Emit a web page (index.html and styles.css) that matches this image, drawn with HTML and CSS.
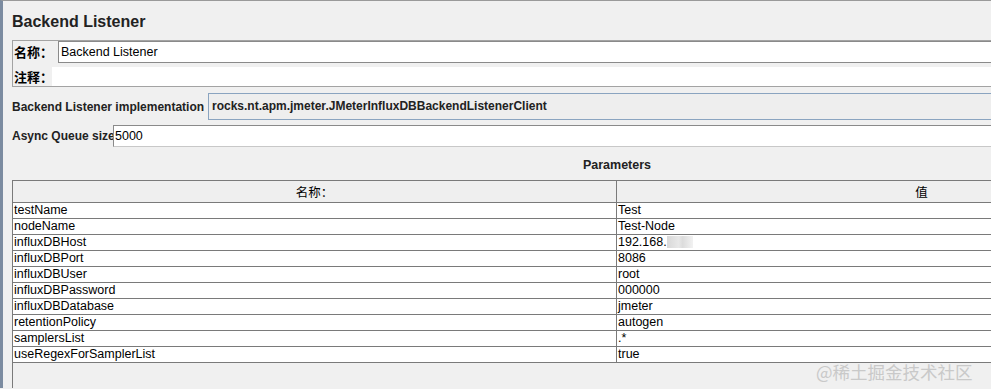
FILE: index.html
```html
<!DOCTYPE html>
<html lang="zh">
<head>
<meta charset="utf-8">
<title>Backend Listener</title>
<link rel="stylesheet" href="styles.css">
</head>
<body>
<div class="frame">
  <h1 class="title">Backend Listener</h1>

  <div class="namebox">
    <div class="namerow">
      <span class="cn-label name-label">名称：</span>
      <div class="textfield name-field">Backend Listener</div>
    </div>
    <div class="commentrow">
      <span class="cn-label comment-label">注释：</span>
      <div class="comment-field"></div>
    </div>
  </div>

  <div class="implrow">
    <span class="label">Backend Listener implementation</span>
    <div class="combo">rocks.nt.apm.jmeter.JMeterInfluxDBBackendListenerClient</div>
  </div>

  <div class="queuerow">
    <span class="label">Async Queue size</span>
    <div class="textfield queue-field">5000</div>
  </div>

  <div class="params-title">Parameters</div>

  <div class="scrollpane">
    <div class="grid">
      <div class="hcell">名称：</div><div class="hcell col2">值</div>
      <div class="cell">testName</div><div class="cell col2">Test</div>
      <div class="cell">nodeName</div><div class="cell col2">Test-Node</div>
      <div class="cell">influxDBHost</div><div class="cell col2">192.168.<span class="blur"></span></div>
      <div class="cell">influxDBPort</div><div class="cell col2">8086</div>
      <div class="cell">influxDBUser</div><div class="cell col2">root</div>
      <div class="cell">influxDBPassword</div><div class="cell col2">000000</div>
      <div class="cell">influxDBDatabase</div><div class="cell col2">jmeter</div>
      <div class="cell">retentionPolicy</div><div class="cell col2">autogen</div>
      <div class="cell">samplersList</div><div class="cell col2">.*</div>
      <div class="cell">useRegexForSamplerList</div><div class="cell col2">true</div>
    </div>
  </div>
</div>
<div class="watermark">@稀土掘金技术社区</div>
</body>
</html>
```

FILE: styles.css
```css
html, body {
  margin: 0;
  padding: 0;
  overflow: hidden;
}
body {
  width: 991px;
  height: 389px;
  background: #f0f0f0;
  font-family: "Liberation Sans", Arial, "Noto Sans CJK SC", sans-serif;
  color: #000;
  position: relative;
}
.frame {
  width: 1240px;
  height: 388px;
  border-top: 1px solid #9a9a9a;
  border-left: 3px solid #7b8ba0;
  padding-left: 9px;
  box-sizing: border-box;
  display: flex;
  flex-direction: column;
}
.title {
  margin: 11px 0 0 0;
  font-size: 16px;
  line-height: 20px;
  font-weight: bold;
  color: #222;
}
.namebox {
  margin-top: 8px;
  width: 1214px;
  border: 1px solid #a3a3a3;
  display: flex;
  flex-direction: column;
}
.namerow {
  display: flex;
  height: 22px;
  align-items: center;
}
.cn-label {
  flex: none;
  white-space: nowrap;
  font-family: "Noto Sans CJK SC", sans-serif;
  font-weight: bold;
  font-size: 13px;
  line-height: 18px;
  padding-left: 1px;
  box-sizing: border-box;
  overflow: visible;
}
.name-label { width: 45px; }
.comment-label { width: 39px; }
.textfield {
  box-sizing: border-box;
  height: 22px;
  background: #fff;
  border: 1px solid #8a8a8a;
  border-right-color: #c8c8c8;
  border-bottom-color: #c8c8c8;
  font-size: 12.5px;
  line-height: 20px;
  padding-left: 2px;
  flex: 1;
}
.name-field { border-bottom-color: #8a8a8a; }
.commentrow {
  margin-top: 4px;
  display: flex;
  height: 19px;
  align-items: center;
}
.comment-field {
  flex: 1;
  height: 19px;
  background: #fff;
}
.label {
  flex: none;
  white-space: nowrap;
  font-size: 12px;
  font-weight: bold;
  color: #222;
}
.implrow {
  margin-top: 6px;
  display: flex;
  align-items: center;
  height: 27px;
}
.implrow .label { width: 196px; }
.combo {
  flex: 1;
  box-sizing: border-box;
  height: 27px;
  border: 1px solid #8aa4c0;
  background: #eeeeee;
  font-size: 12px;
  font-weight: bold;
  line-height: 25px;
  padding-left: 3px;
  color: #222;
  white-space: nowrap;
}
.queuerow {
  margin-top: 5px;
  display: flex;
  align-items: center;
  height: 22px;
}
.queuerow .label { width: 101px; }
.queue-field { padding-left: 1px; }
.params-title {
  box-sizing: border-box;
  height: 33px;
  padding-top: 4px;
  line-height: 29px;
  width: 1210px;
  text-align: center;
  font-size: 12.5px;
  font-weight: bold;
  color: #222;
}
.scrollpane {
  flex: 1;
  width: 1214px;
  border-top: 1px solid #7a7a7a;
  border-left: 1px solid #7a7a7a;
}
.grid {
  display: grid;
  grid-template-columns: 603px 610px;
  font-size: 12.5px;
}
.hcell {
  height: 21px;
  line-height: 21px;
  text-align: center;
  background: #efefef;
  border-bottom: 1px solid #7a7a7a;
  font-family: "Noto Sans CJK SC", sans-serif;
  font-size: 12.5px;
}
.cell {
  height: 15px;
  line-height: 15px;
  background: #fff;
  border-bottom: 1px solid #7a7a7a;
  padding-left: 1px;
  white-space: nowrap;
  overflow: hidden;
}
.col2 {
  border-left: 1px solid #7a7a7a;
}
.blur {
  display: inline-block;
  width: 26px;
  height: 12px;
  vertical-align: -2px;
  background: linear-gradient(90deg, #d8d8d8, #e8e8e8 45%, #dcdcdc 60%, #f2f2f2);
}
.watermark {
  position: absolute;
  left: 816px;
  top: 361px;
  font-family: "Noto Sans CJK SC", sans-serif;
  font-size: 17.5px;
  line-height: 22px;
  color: #c9c9c9;
  white-space: nowrap;
}
```
